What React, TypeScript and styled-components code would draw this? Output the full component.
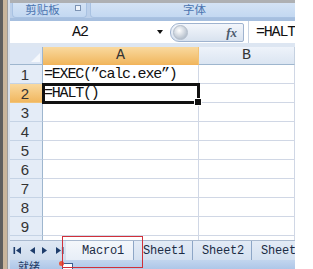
import { Fragment } from 'react';
import styled, { createGlobalStyle } from 'styled-components';

const GlobalStyle = createGlobalStyle`
  html, body {
    margin: 0;
    padding: 0;
    background: #fff;
  }
`;

const Screen = styled.div`
  width: 313px;
  height: 269px;
  overflow: hidden;
  display: flex;
  background: #fff;
`;

const Frame = styled.div`
  width: 10px;
  flex-shrink: 0;
  background: linear-gradient(to right, #5e5e5e 0 3px, #c9b59b 3px 7px, #9c9c9c 7px 8px, #d7dee8 8px);
`;

const Main = styled.div`
  width: 285px;
  flex-shrink: 0;
  display: flex;
  flex-direction: column;
  overflow: hidden;
`;

const Filler = styled.div`
  flex: 1;
  background: #fff;
`;

const TopEdge = styled.div`
  height: 3px;
  background: #aeb0b3;
`;

const Ribbon = styled.div`
  height: 15px;
  display: flex;
  gap: 3px;
  padding: 0 0 0 2px;
  background: #bcd0ea;
  border-bottom: 3px solid #a6bfdf;
`;

const Group = styled.div<{ $w: number }>`
  position: relative;
  width: ${(p) => p.$w}px;
  flex-shrink: 0;
  display: flex;
  justify-content: center;
  align-items: center;
  background: linear-gradient(#d4e3f5, #c3d8f1);
  border: 1px solid #a9c2e2;
  border-top: none;
  border-radius: 0 0 4px 4px;
  font-family: 'Noto Sans CJK SC', sans-serif;
  font-size: 11.5px;
  color: #4a74b0;
  line-height: 1;
`;

const GroupLabel = styled.span<{ $shift?: number }>`
  margin-right: ${(p) => p.$shift ?? 0}px;
`;

const Launcher = styled.span`
  position: absolute;
  right: 5px;
  top: 2px;
  width: 4px;
  height: 4px;
  border: 1px solid #7c93b3;
  background: #eef3fa;
`;

const FormulaBar = styled.div`
  height: 22px;
  display: flex;
  align-items: stretch;
  background: #fff;
  border-bottom: 4px solid #dde6f2;
`;

const NameBox = styled.div`
  width: 140px;
  display: flex;
  justify-content: center;
  align-items: center;
  font-family: 'Liberation Mono', monospace;
  font-size: 15px;
  letter-spacing: -1px;
  color: #111;
`;

const Arrow = styled.div`
  width: 20px;
  display: flex;
  align-items: center;
  justify-content: center;
  &::after {
    content: '';
    border-left: 3px solid transparent;
    border-right: 3px solid transparent;
    border-top: 4px solid #111;
  }
`;

const Capsule = styled.div`
  width: 74px;
  margin: 2px 4px 1px 0;
  display: flex;
  align-items: center;
  justify-content: space-between;
  padding: 0 6px 0 2px;
  box-sizing: border-box;
  border: 1px solid #9fb3cf;
  border-radius: 9px 2px 2px 9px;
  background: linear-gradient(#f3f6fb, #d8e2ef);
`;

const Knob = styled.span`
  width: 13px;
  height: 13px;
  border-radius: 50%;
  background: radial-gradient(circle at 40% 35%, #ffffff, #b9c3cf 70%);
  border: 1px solid #b3bdca;
`;

const Fx = styled.span`
  font-family: 'Liberation Serif', serif;
  font-style: italic;
  font-weight: bold;
  font-size: 13px;
  color: #4b5a6e;
`;

const FormulaText = styled.div`
  flex: 1;
  display: flex;
  align-items: center;
  padding-left: 7px;
  border-left: 1px solid #c8d3e2;
  font-family: 'Liberation Mono', monospace;
  font-size: 15px;
  letter-spacing: -1.2px;
  color: #111;
  overflow: hidden;
  white-space: nowrap;
`;

const Grid = styled.div`
  display: grid;
  grid-template-columns: 33px 156px 96px;
  grid-template-rows: 18px repeat(10, 19px);
  height: 193px;
  flex-shrink: 0;
  overflow: hidden;
  background: #fff;
`;

const Corner = styled.div`
  position: relative;
  background: #dce6f4;
  border-right: 1px solid #9eb6ce;
  border-bottom: 1px solid #9eb6ce;
  &::after {
    content: '';
    position: absolute;
    right: 2px;
    bottom: 2px;
    border-left: 9px solid transparent;
    border-bottom: 9px solid #f5f8fc;
  }
`;

const ColHead = styled.div<{ $active?: boolean }>`
  display: flex;
  align-items: center;
  justify-content: center;
  background: ${(p) => (p.$active ? 'linear-gradient(#f9d99f, #f1b75f)' : 'linear-gradient(#eef3fa, #dbe5f2)')};
  border-right: 1px solid ${(p) => (p.$active ? '#f2c377' : '#c5d1e0')};
  border-bottom: 1px solid ${(p) => (p.$active ? '#f2b35a' : '#9eb6ce')};
  font-family: 'Liberation Mono', monospace;
  font-size: 15px;
  color: #333;
`;

const RowHead = styled.div<{ $active?: boolean }>`
  display: flex;
  align-items: center;
  justify-content: center;
  padding-right: 2px;
  background: ${(p) => (p.$active ? 'linear-gradient(#f9d99f, #f1b75f)' : '#e4ecf7')};
  border-right: 1px solid #9eb6ce;
  border-bottom: 1px solid ${(p) => (p.$active ? '#f2c377' : '#c5d3e5')};
  font-family: 'Liberation Sans', sans-serif;
  font-size: 15px;
  color: #333;
`;

const Cell = styled.div<{ $selected?: boolean }>`
  position: relative;
  display: flex;
  align-items: center;
  padding-left: 1px;
  border-right: 1px solid #d0d7e5;
  border-bottom: 1px solid #d0d7e5;
  font-family: 'Liberation Mono', monospace;
  font-size: 15px;
  letter-spacing: -1.2px;
  color: #111;
  white-space: nowrap;
  outline: ${(p) => (p.$selected ? '3px solid #111' : 'none')};
  outline-offset: -2px;
  &::after {
    content: '';
    display: ${(p) => (p.$selected ? 'block' : 'none')};
    position: absolute;
    right: -4px;
    bottom: -4px;
    width: 6px;
    height: 6px;
    background: #111;
    border: 1px solid #fff;
    z-index: 2;
  }
`;

const TabBar = styled.div`
  position: relative;
  height: 19px;
  flex-shrink: 0;
  display: flex;
  align-items: stretch;
  background: linear-gradient(#dfe8f4, #cfdced);
  border-top: 1px solid #a9b9cf;
`;

const Nav = styled.div`
  width: 56px;
  flex-shrink: 0;
  box-sizing: border-box;
  padding-left: 3px;
  display: flex;
  align-items: center;
  gap: 5px;
`;

const Tab = styled.div<{ $active?: boolean }>`
  flex-shrink: 0;
  display: flex;
  align-items: center;
  padding: 0 ${(p) => (p.$active ? 9 : 7)}px 0 ${(p) => (p.$active ? 16 : 9)}px;
  background: ${(p) => (p.$active ? 'linear-gradient(#f4f7fb, #e7eef7)' : 'linear-gradient(#e3ebf6, #d3e0f0)')};
  border-right: 1px solid #8da6c6;
  font-family: 'Liberation Mono', monospace;
  font-size: 12px;
  letter-spacing: -0.2px;
  color: #1b2b44;
  white-space: nowrap;
`;

const Highlight = styled.div`
  position: absolute;
  left: 52px;
  top: -5px;
  width: 81px;
  height: 32px;
  border: 1px solid #d0303a;
  box-sizing: border-box;
  pointer-events: none;
  z-index: 3;
`;

const Status = styled.div`
  flex: 1;
  display: flex;
  align-items: flex-start;
  gap: 22px;
  padding-left: 8px;
  background: linear-gradient(#c2d5ee, #aec7e8);
  font-family: 'Noto Sans CJK SC', sans-serif;
  font-size: 11px;
  line-height: 13px;
  color: #1d3a66;
  overflow: hidden;
`;

const Record = styled.span`
  margin-top: 3px;
  width: 9px;
  height: 7px;
  border: 1px solid #3d5d8e;
  background: #fff;
  position: relative;
  &::before {
    content: '';
    position: absolute;
    left: -4px;
    top: -3px;
    width: 5px;
    height: 5px;
    border-radius: 50%;
    background: #e8563c;
  }
`;

const NavIcon = ({ dir, bar }: { dir: 'l' | 'r'; bar?: boolean }) => (
  <svg width="9" height="9" viewBox="0 0 9 9">
    {dir === 'l' ? (
      <>
        {bar && <rect x="0.5" y="1" width="1.6" height="7" fill="#1f3d6b" />}
        <path d="M3 4.5 L8 1 L8 8 Z" fill="#1f3d6b" />
      </>
    ) : (
      <>
        <path d="M6 4.5 L1 1 L1 8 Z" fill="#1f3d6b" />
        {bar && <rect x="6.9" y="1" width="1.6" height="7" fill="#1f3d6b" />}
      </>
    )}
  </svg>
);

const rows = ['=EXEC(\u201dcalc.exe\u201d)', '=HALT()', '', '', '', '', '', '', '', ''];

export default function App() {
  return (
    <>
      <GlobalStyle />
      <Screen>
        <Frame />
        <Main>
          <TopEdge />
          <Ribbon>
            <Group $w={73}>
              <GroupLabel $shift={14}>剪贴板</GroupLabel>
              <Launcher />
            </Group>
            <Group $w={207}>字体</Group>
          </Ribbon>
          <FormulaBar>
            <NameBox>A2</NameBox>
            <Arrow />
            <Capsule>
              <Knob />
              <Fx>fx</Fx>
            </Capsule>
            <FormulaText>=HALT()</FormulaText>
          </FormulaBar>
          <Grid>
            <Corner />
            <ColHead $active>A</ColHead>
            <ColHead>B</ColHead>
            {rows.map((text, i) => (
              <Fragment key={i}>
                <RowHead $active={i === 1}>{i + 1}</RowHead>
                <Cell $selected={i === 1}>{text}</Cell>
                <Cell />
              </Fragment>
            ))}
          </Grid>
          <TabBar>
            <Nav>
              <NavIcon dir="l" bar />
              <NavIcon dir="l" />
              <NavIcon dir="r" />
              <NavIcon dir="r" bar />
            </Nav>
            <Tab $active>Macro1</Tab>
            <Tab>Sheet1</Tab>
            <Tab>Sheet2</Tab>
            <Tab>Sheet3</Tab>
            <Highlight />
          </TabBar>
          <Status>
            <span>就绪</span>
            <Record />
          </Status>
        </Main>
        <Filler />
      </Screen>
    </>
  );
}
